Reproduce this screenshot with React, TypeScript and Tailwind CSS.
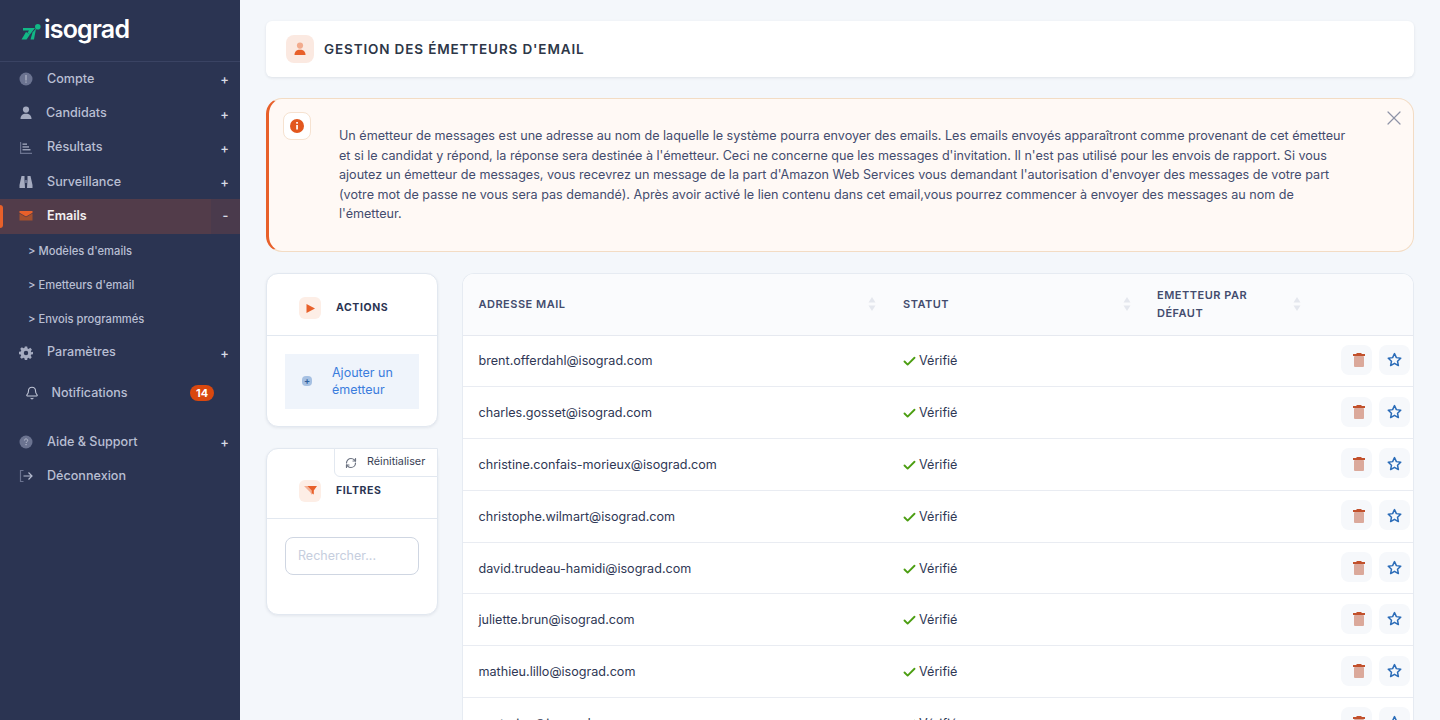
import React from "react";
import { Bell, Check, RefreshCw, X } from "lucide-react";

interface NavItem {
  label: string;
  icon: React.ReactNode;
  labelClass?: string;
  plus?: boolean;
}

const emails = [
  "brent.offerdahl@isograd.com",
  "charles.gosset@isograd.com",
  "christine.confais-morieux@isograd.com",
  "christophe.wilmart@isograd.com",
  "david.trudeau-hamidi@isograd.com",
  "juliette.brun@isograd.com",
  "mathieu.lillo@isograd.com",
  "nseterine@isograd.com",
];

const InfoDot = () => (
  <svg width="14" height="14" viewBox="0 0 14 14">
    <circle cx="7" cy="7" r="6.500" fill="#6b7390" />
    <rect x="6.500" y="3" width="1" height="5.500" fill="#c1c5d4" />
    <rect x="6.500" y="9.500" width="1" height="1.200" fill="#c1c5d4" />
  </svg>
);

const UserIcon = ({ head, body }: { head: string; body: string }) => (
  <svg width="14" height="14" viewBox="0 0 14 14">
    <circle cx="7" cy="3.600" r="3.100" fill={head} />
    <path d="M1.500 13c0-3.400 2-5.300 5.500-5.300s5.500 1.900 5.500 5.300z" fill={body} />
  </svg>
);

const ChartIcon = () => (
  <svg width="14" height="14" viewBox="0 0 14 14" fill="#a5abc0">
    <path d="M1 1h1.200v10.800H13V13H1z" fill="#6b7390" />
    <rect x="3.500" y="2.500" width="4.500" height="1.300" />
    <rect x="3.500" y="5.300" width="6.500" height="1.300" />
    <rect x="3.500" y="8.100" width="8" height="1.300" />
  </svg>
);

const BinocularsIcon = () => (
  <svg width="14" height="14" viewBox="0 0 14 14" fill="#a5abc0">
    <path d="M2.500 1h3v3.500l.5 8.500H.5v-3z" />
    <path d="M8.500 1h3l2 9v3H8l.5-8.500z" />
    <rect x="6" y="5" width="2" height="3" fill="#6b7390" />
  </svg>
);

const MailIcon = () => (
  <svg width="14" height="14" viewBox="0 0 14 14">
    <path d="M.5 4.500 7 8.300l6.500-3.800v7H.5z" fill="#a2502f" />
    <path d="M.5 2h13v1.700L7 7.500.5 3.700z" fill="#e8602a" />
  </svg>
);

const GearIcon = () => (
  <svg width="14" height="14" viewBox="0 0 24 24">
    <path
      fillRule="evenodd"
      fill="#a5abc0"
      d="M10 1h4l.7 3.200 1.800.8 2.800-1.800 2.800 2.800-1.800 2.800.8 1.800L24 10v4l-3.100.7-.8 1.800 1.800 2.800-2.800 2.800-2.800-1.800-1.800.8L14 24h-4l-.7-3.100-1.800-.8-2.800 1.800-2.800-2.800 1.800-2.800-.8-1.800L0 14v-4l3.100-.7.8-1.800-1.800-2.800L4.900 2l2.800 1.800 1.800-.8zM12 8.200a3.800 3.800 0 1 0 0 7.600 3.800 3.800 0 0 0 0-7.600z"
    />
  </svg>
);

const HelpDot = () => (
  <svg width="14" height="14" viewBox="0 0 14 14">
    <circle cx="7" cy="7" r="6.500" fill="#6b7390" />
    <path d="M5.400 5.500c0-2.100 3.300-2.100 3.300 0 0 1.300-1.600 1.200-1.600 2.500" stroke="#b6bbcd" strokeWidth="1" fill="none" />
    <rect x="6.500" y="9" width="1.100" height="1.200" fill="#b6bbcd" />
  </svg>
);

const LogoutIcon = () => (
  <svg width="14" height="14" viewBox="0 0 14 14" fill="none">
    <path d="M4.500 1.500h-3v11h3" stroke="#6b7390" strokeWidth="1.200" />
    <path d="M4.500 7H13M9.500 3.500 13 7l-3.500 3.500" stroke="#b4bace" strokeWidth="1.200" />
  </svg>
);

const SortArrows = () => (
  <svg width="8" height="14" viewBox="0 0 8 14" fill="#e4e7ee">
    <path d="M4 0l3.500 5.500H.5z" />
    <path d="M4 14l3.500-5.500H.5z" />
  </svg>
);

const TrashIcon = () => (
  <svg width="14" height="15" viewBox="0 0 14 15">
    <rect x="2" y="4" width="10" height="11" rx="1" fill="#dba99b" />
    <rect x="1" y="2" width="12" height="2" fill="#c2512c" />
    <rect x="4.500" y="1" width="5" height="1.500" fill="#c2512c" />
  </svg>
);

const StarIcon = () => (
  <svg width="15" height="15" viewBox="0 0 24 24" fill="none" stroke="#2b6cb8" strokeWidth="2.400" strokeLinejoin="round">
    <path d="M12 2.500l3 6.500 7 .9-5.200 4.800 1.400 7-6.200-3.500-6.200 3.500 1.400-7L2 9.900 9 9z" />
  </svg>
);

const SideRow = ({ label, icon, labelClass = "ml-[14px]", plus = true }: NavItem) => (
  <div className="flex h-[34.300px] items-center pl-[19px] pr-[11px] text-[12.600px] font-medium text-[#b9bfd3]">
    <span className="flex w-[14px] justify-center">{icon}</span>
    <span className={`flex-1 ${labelClass}`}>{label}</span>
    {plus && <span className="pt-0.5 text-[13px] text-[#d7dbe6]">+</span>}
  </div>
);

const Sidebar = () => (
  <aside className="flex h-full w-[240px] shrink-0 flex-col bg-[#2b3452]">
    <div className="flex h-[62px] shrink-0 items-center border-b border-[#3a4363] pl-[21px]">
      <svg width="20" height="16" viewBox="0 0 20 16" className="mt-[2px]">
        <path d="M.5 15.500 5 8l4 2.500-3.500 5z" fill="#12b886" />
        <path d="M2 4h12L9 10.500 6.500 8.700 8 6.500H2z" fill="#12b886" />
        <path d="M15 4.500 13 15.500H9.500l2-7z" fill="#12b886" />
        <circle cx="16.800" cy="2.800" r="2.800" fill="#12b886" />
      </svg>
      <span className="ml-[3px] -mt-[3px] text-[25px] font-semibold leading-none tracking-[-0.800px] text-white">isograd</span>
    </div>
    <SideRow label="Compte" icon={<InfoDot />} />
    <SideRow label="Candidats" icon={<UserIcon head="#a5abc0" body="#a5abc0" />} labelClass="ml-[13px]" />
    <SideRow label="Résultats" icon={<ChartIcon />} />
    <SideRow label="Surveillance" icon={<BinocularsIcon />} />
    <div className="relative flex h-[34.500px] items-center bg-[#523c4a] pl-[19px] text-[12.600px] font-semibold text-[#f3f0f1]">
      <span className="absolute left-0 top-[6px] h-[23px] w-[3px] rounded-r-sm bg-[#e8602a]" />
      <span className="flex w-[14px] justify-center"><MailIcon /></span>
      <span className="ml-[14px] flex-1">Emails</span>
      <span className="flex h-full w-[29px] items-center justify-center bg-[#4a3a4c] text-[#d7dbe6]">-</span>
    </div>
    <div className="flex flex-col text-[11.200px] font-medium text-[#b9bfd3]">
      <div className="flex h-[34px] items-center pl-[28px] pt-[2px]">&gt; Modèles d'emails</div>
      <div className="flex h-[34px] items-center pl-[28px] pt-[2px]">&gt; Emetteurs d'email</div>
      <div className="flex h-[34px] items-center pl-[28px] pt-[2px]">&gt; Envois programmés</div>
    </div>
    <SideRow label="Paramètres" icon={<GearIcon />} />
    <div className="flex h-[47px] items-center pl-[24.500px] pr-[26px] text-[12.500px] font-medium text-[#b9bfd3]">
      <Bell size={14} strokeWidth={1.800} className="text-[#c4c9da]" />
      <span className="ml-[13px] flex-1">Notifications</span>
      <span className="flex h-4 w-6 items-center justify-center rounded-full bg-[#d9480f] text-[11px] font-bold text-white">14</span>
    </div>
    <div className="mt-2">
      <SideRow label="Aide & Support" icon={<HelpDot />} />
      <SideRow label="Déconnexion" icon={<LogoutIcon />} plus={false} />
    </div>
  </aside>
);

const PanelHead = ({ icon, title, className = "" }: { icon: React.ReactNode; title: string; className?: string }) => (
  <div className={`flex items-center border-b border-[#e2e8f0] pl-[32px] ${className}`}>
    <span className="flex h-[22px] w-[22px] items-center justify-center rounded-md bg-[#fdeee6]">{icon}</span>
    <span className="ml-[15px] text-[10.500px] font-bold tracking-[0.600px] text-[#2b3452]">{title}</span>
  </div>
);

const EmailRow = ({ email }: { email: string }) => (
  <div className="flex h-[51.800px] shrink-0 items-center border-b border-[#e9ecf2] text-[12.600px] text-[#2f3855]">
    <span className="w-[440px] pl-[15.500px] pt-[2px]">{email}</span>
    <span className="flex w-[254px] items-center gap-[2px] pt-[2px]">
      <Check size={15} strokeWidth={3} className="-ml-[1px] text-[#4c9e12]" />
      Vérifié
    </span>
    <span className="flex-1" />
    <span className="flex gap-[7px] pb-[2px] pr-[3.500px]">
      <button className="flex h-[30px] w-[31px] items-center justify-center rounded-lg bg-[#f6f8fb] pl-[5px]"><TrashIcon /></button>
      <button className="flex h-[30px] w-[31px] items-center justify-center rounded-lg bg-[#f6f8fb]"><StarIcon /></button>
    </span>
  </div>
);

export default function App() {
  return (
    <div className="flex h-screen overflow-hidden bg-[#f4f7fb] font-['Inter',sans-serif]">
      <Sidebar />
      <main className="flex min-w-0 flex-1 flex-col px-[26px] pt-[21px]">
        <header className="flex h-[56px] shrink-0 items-center rounded-md bg-white pl-5 shadow-[0_1px_3px_rgba(30,41,59,0.1)]">
          <span className="flex h-7 w-7 items-center justify-center rounded-lg bg-[#fbe9e1]">
            <UserIcon head="#f2ab8d" body="#e8602a" />
          </span>
          <h1 className="ml-[10px] text-[13.500px] font-semibold tracking-[0.860px] text-[#2d3748]">GESTION DES ÉMETTEURS D'EMAIL</h1>
        </header>

        <section className="relative mt-[21px] h-[154px] shrink-0 rounded-2xl border border-[#f3dcc4] border-l-[3px] border-l-[#e8602a] bg-[#fff9f5] pl-[70px] pr-[64px] pt-[27px] text-[12.600px] leading-[19.500px] text-[#434c6e]">
          <span className="absolute left-[14px] top-[13px] flex h-7 w-7 items-center justify-center rounded-lg border border-[#f6e2d0] bg-white">
            <svg width="14" height="14" viewBox="0 0 14 14">
              <circle cx="7" cy="7" r="7" fill="#e2571e" />
              <rect x="6.200" y="3" width="1.700" height="1.700" fill="#fff" />
              <rect x="6.200" y="6" width="1.700" height="4.500" fill="#fff" />
            </svg>
          </span>
          <X size={24} strokeWidth={1.200} className="absolute right-[7.500px] top-[7px] text-[#8e93a6]" />
          <p>
            Un émetteur de messages est une adresse au nom de laquelle le système pourra envoyer des emails. Les emails envoyés apparaîtront comme provenant de cet émetteur et si le candidat y répond, la réponse sera destinée à l'émetteur. Ceci ne concerne que les messages d'invitation. Il n'est pas utilisé pour les envois de rapport. Si vous ajoutez un émetteur de messages, vous recevrez un message de la part d'Amazon Web Services vous demandant l'autorisation d'envoyer des messages de votre part (votre mot de passe ne vous sera pas demandé). Après avoir activé le lien contenu dans cet email,vous pourrez commencer à envoyer des messages au nom de l'émetteur.
          </p>
        </section>

        <div className="mt-[21px] flex min-h-0 flex-1 gap-6">
          <div className="flex w-[172px] shrink-0 flex-col gap-[21px]">
            <div className="h-[154px] rounded-xl border border-[#e2e8f0] bg-white shadow-[0_1px_3px_rgba(30,41,59,0.08)]">
              <PanelHead
                className="h-[62px] pt-[7px]"
                title="ACTIONS"
                icon={
                  <svg width="11" height="11" viewBox="0 0 11 11"><path d="M1.500 1 10 5.500 1.500 10z" fill="#e8602a" /></svg>
                }
              />
              <div className="mx-[18px] mt-[18px] flex h-[55px] items-center bg-[#eff4fb] pb-[2px] pl-[17px] text-[12.500px] leading-[17px] text-[#3b7ddd]">
                <span className="flex h-[10px] w-[10px] items-center justify-center rounded-sm bg-[#a6c0e2] text-[9px] font-bold leading-none text-[#2b5f9e]">+</span>
                <span className="ml-[20px]">Ajouter un<br />émetteur</span>
              </div>
            </div>

            <div className="relative h-[167px] rounded-xl border border-[#e2e8f0] bg-white shadow-[0_1px_3px_rgba(30,41,59,0.08)]">
              <div className="absolute -right-px -top-px flex h-[29px] w-[104px] items-center rounded-bl-md border border-[#e2e8f0] bg-white pl-[10px] text-[10.800px] text-[#3a4255]">
                <RefreshCw size={12} strokeWidth={2.400} className="text-[#6b7280]" />
                <span className="ml-[10px]">Réinitialiser</span>
              </div>
              <PanelHead
                className="h-[70px] pt-[14px]"
                title="FILTRES"
                icon={
                  <svg width="13" height="11" viewBox="0 0 13 11">
                    <path d="M0 1h7l2 4-1 5-2-3z" fill="#f4b196" />
                    <path d="M3.500 1H13L9.800 5.500v4l-2-1.200V5.500z" fill="#e8602a" />
                  </svg>
                }
              />
              <input
                placeholder="Rechercher..."
                className="mx-[18px] mt-[18px] h-[38px] w-[134px] rounded-lg border border-[#cfd6e2] bg-white pb-[2px] pl-3 text-[12.500px] outline-none placeholder:text-[#c6cede]"
              />
            </div>
          </div>

          <div className="flex min-w-0 flex-1 flex-col overflow-hidden rounded-t-xl border border-b-0 border-[#e6ebf2] bg-white">
            <div className="flex h-[61.500px] shrink-0 items-center border-b border-[#e6e9f0] bg-[#fafbfd] text-[11px] font-semibold leading-[18px] tracking-[0.500px] text-[#434c6e]">
              <span className="flex w-[440px] items-center pl-[15.500px] pr-[27px]"><span className="flex-1">ADRESSE MAIL</span><SortArrows /></span>
              <span className="flex w-[254px] items-center pr-[26px]"><span className="flex-1">STATUT</span><SortArrows /></span>
              <span className="flex w-[144px] items-center"><span className="flex-1">EMETTEUR PAR<br />DÉFAUT</span><SortArrows /></span>
            </div>
            {emails.map((email) => (
              <EmailRow key={email} email={email} />
            ))}
          </div>
        </div>
      </main>
    </div>
  );
}
